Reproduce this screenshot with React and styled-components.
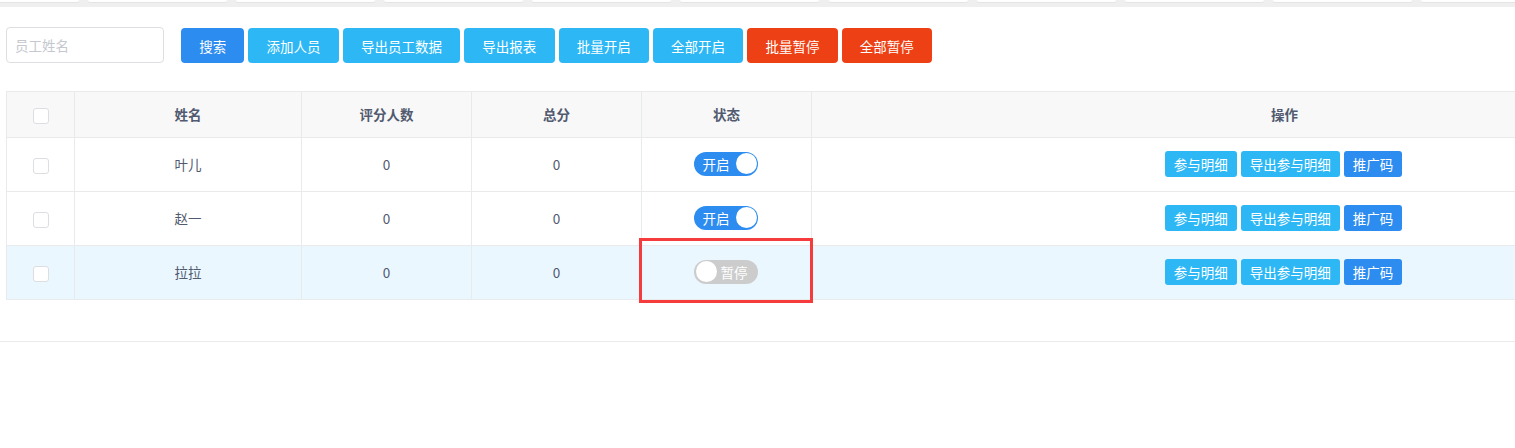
import React from "react";
import styled, { createGlobalStyle } from "styled-components";

const GlobalStyle = createGlobalStyle`
  html, body {
    margin: 0;
    padding: 0;
    background: #fff;
    overflow: hidden;
  }
  body {
    font-family: "Noto Sans CJK SC", "Liberation Sans", sans-serif;
    color: #515a6e;
  }
`;

const staff = [
  { id: 1, name: "叶儿", raters: 0, total: 0, on: true },
  { id: 2, name: "赵一", raters: 0, total: 0, on: true },
  { id: 3, name: "拉拉", raters: 0, total: 0, on: false, hover: true },
];

const toolButtons = [
  { label: "搜索", kind: "primary" },
  { label: "添加人员", kind: "info" },
  { label: "导出员工数据", kind: "info" },
  { label: "导出报表", kind: "info" },
  { label: "批量开启", kind: "info" },
  { label: "全部开启", kind: "info" },
  { label: "批量暂停", kind: "error" },
  { label: "全部暂停", kind: "error" },
];

const colors = {
  primary: "#2d8cf0",
  info: "#2db7f5",
  error: "#ed4014",
};

const App = () => {
  return (
    <Page>
      <GlobalStyle />
      <TabStrip>
        {Array.from({ length: 11 }).map((_, i) => (
          <TabStub key={i} />
        ))}
      </TabStrip>
      <Content>
        <Toolbar>
          <SearchInput placeholder="员工姓名" />
          <ButtonGroup>
            {toolButtons.map((b) => (
              <ToolButton key={b.label} $kind={b.kind}>
                {b.label}
              </ToolButton>
            ))}
          </ButtonGroup>
        </Toolbar>
        <TableWrap>
          <Table>
            <colgroup>
              <col style={{ width: 68 }} />
              <col style={{ width: 227 }} />
              <col style={{ width: 170 }} />
              <col style={{ width: 170 }} />
              <col style={{ width: 170 }} />
              <col style={{ width: 946 }} />
            </colgroup>
            <thead>
              <tr>
                <Th>
                  <Checkbox />
                </Th>
                <Th>姓名</Th>
                <Th>评分人数</Th>
                <Th>总分</Th>
                <Th>状态</Th>
                <Th>操作</Th>
              </tr>
            </thead>
            <tbody>
              {staff.map((s) => (
                <Row key={s.id} $hover={s.hover}>
                  <Td>
                    <Checkbox />
                  </Td>
                  <Td>{s.name}</Td>
                  <Td>{s.raters}</Td>
                  <Td>{s.total}</Td>
                  <Td>
                    <Switch $on={s.on}>
                      <SwitchText>{s.on ? "开启" : "暂停"}</SwitchText>
                      <Knob />
                    </Switch>
                  </Td>
                  <Td>
                    <Actions>
                      <SmallButton $kind="info">参与明细</SmallButton>
                      <SmallButton $kind="info">导出参与明细</SmallButton>
                      <SmallButton $kind="primary">推广码</SmallButton>
                    </Actions>
                  </Td>
                </Row>
              ))}
            </tbody>
          </Table>
          <Highlight />
        </TableWrap>
      </Content>
      <BottomLine />
    </Page>
  );
};

const Page = styled.div`
  width: 1515px;
  height: 448px;
  overflow: hidden;
`;

const TabStrip = styled.div`
  height: 7px;
  background: #efefef;
  display: flex;
  gap: 9.1px;
  margin-left: -60px;
  overflow: hidden;
`;

const TabStub = styled.div`
  flex: 0 0 139px;
  height: 2px;
  background: #fff;
  border-radius: 0 0 3px 3px;
  box-shadow: 0 1px 0 #e4e4e4;
`;

const Content = styled.div`
  padding: 20px 0 0 6px;
`;

const Toolbar = styled.div`
  display: flex;
  align-items: flex-start;
  gap: 17px;
`;

const SearchInput = styled.input`
  box-sizing: border-box;
  width: 158px;
  height: 36px;
  border: 1px solid #dcdee2;
  border-radius: 4px;
  padding: 0 8px;
  font-family: inherit;
  font-size: 13.5px;
  outline: none;
  &::placeholder {
    color: #c5c8ce;
  }
`;

const ButtonGroup = styled.div`
  display: flex;
  gap: 4px;
  margin-top: 1px;
`;

const ToolButton = styled.button`
  height: 35px;
  padding: 0 18.2px;
  border: none;
  border-radius: 4px;
  background: ${(p) => colors[p.$kind]};
  color: #fff;
  font-family: inherit;
  font-size: 13.5px;
  white-space: nowrap;
`;

const TableWrap = styled.div`
  position: relative;
  margin-top: 28px;
`;

const Table = styled.table`
  width: 1751px;
  table-layout: fixed;
  border-collapse: collapse;
  border: 1px solid #dcdee2;
  font-size: 13.5px;
  color: #515a6e;
`;

const Th = styled.th`
  height: 43px;
  padding: 0 0 2px;
  background: #f8f8f9;
  border: 1px solid #e8eaec;
  font-weight: bold;
  text-align: center;
  vertical-align: middle;
`;

const Row = styled.tr`
  background: ${(p) => (p.$hover ? "#ebf7ff" : "#fff")};
`;

const Td = styled.td`
  height: 51px;
  padding: 0 0 2px;
  border: 1px solid #e8eaec;
  text-align: center;
  vertical-align: middle;
`;

const Checkbox = styled.span`
  display: inline-block;
  box-sizing: border-box;
  width: 16px;
  height: 16px;
  border: 1px solid #dcdee2;
  border-radius: 3px;
  background: #fff;
  vertical-align: middle;
  margin-left: 1px;
`;

const Switch = styled.span`
  position: relative;
  display: inline-flex;
  align-items: center;
  flex-direction: ${(p) => (p.$on ? "row" : "row-reverse")};
  justify-content: space-between;
  box-sizing: border-box;
  width: 64px;
  height: 24px;
  margin-left: -2px;
  padding: ${(p) => (p.$on ? "0 1px 0 9px" : "0 10px 0 2px")};
  border-radius: 12px;
  background: ${(p) => (p.$on ? "#2d8cf0" : "#cccccc")};
  vertical-align: middle;
`;

const SwitchText = styled.span`
  color: #fff;
  font-size: 13.5px;
  line-height: 24px;
`;

const Knob = styled.span`
  width: 21px;
  height: 21px;
  border-radius: 50%;
  background: #fff;
`;

const Actions = styled.div`
  display: flex;
  justify-content: center;
  gap: 4px;
  margin-left: -2px;
`;

const SmallButton = styled.button`
  height: 26px;
  padding: 0 9px;
  border: none;
  border-radius: 3px;
  background: ${(p) => colors[p.$kind]};
  color: #fff;
  font-family: inherit;
  font-size: 13.5px;
  white-space: nowrap;
`;

const Highlight = styled.div`
  position: absolute;
  left: 633px;
  top: 147px;
  width: 174px;
  height: 65px;
  box-sizing: border-box;
  border: 3px solid #f53b3b;
  pointer-events: none;
`;

const BottomLine = styled.div`
  margin-top: 41px;
  border-top: 1px solid #e8eaec;
`;

export default App;
